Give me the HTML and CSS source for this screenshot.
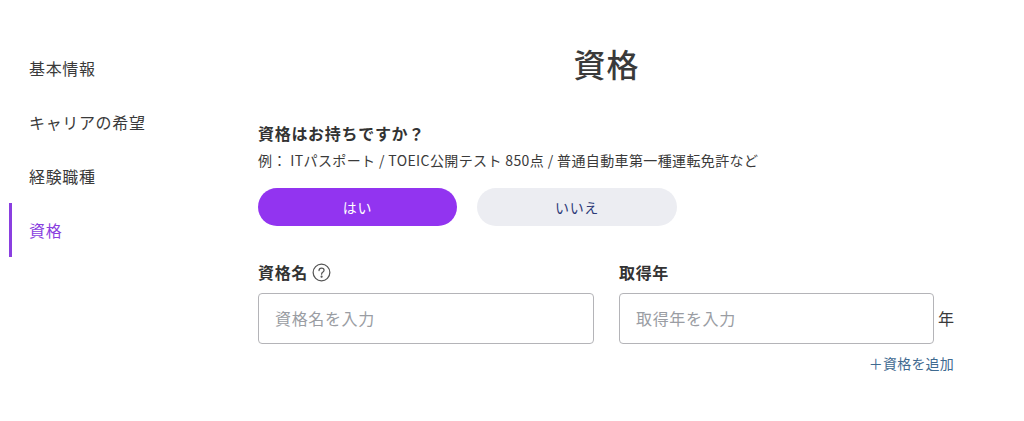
FILE: index.html
```html
<!DOCTYPE html>
<html lang="ja">
<head>
<meta charset="utf-8">
<title>資格</title>
<link rel="stylesheet" href="styles.css">
</head>
<body>
<div class="page">
  <nav class="side">
    <a class="nav-item">基本情報</a>
    <a class="nav-item">キャリアの希望</a>
    <a class="nav-item">経験職種</a>
    <a class="nav-item active">資格</a>
  </nav>
  <main class="main">
    <h1 class="title">資格</h1>
    <h2 class="question">資格はお持ちですか？</h2>
    <p class="example">例： ITパスポート / TOEIC公開テスト 850点 / 普通自動車第一種運転免許など</p>
    <div class="choices">
      <button class="choice on">はい</button>
      <button class="choice off">いいえ</button>
    </div>
    <div class="fields">
      <div class="field name">
        <div class="label">資格名
          <svg class="help" width="19" height="19" viewBox="0 0 20 20" fill="none" stroke="#555" stroke-width="1.3"><circle cx="10" cy="10" r="8.8"/><path d="M7.4 8c0-1.6 1.2-2.6 2.7-2.6s2.6 1 2.6 2.2c0 1.1-.7 1.6-1.5 2.2-.7.5-1.1 1-1.1 2" stroke-linecap="round"/><circle cx="10.1" cy="14.4" r=".5" fill="#555"/></svg>
        </div>
        <div class="input">資格名を入力</div>
      </div>
      <div class="field year">
        <div class="label">取得年</div>
        <div class="year-row">
          <div class="input">取得年を入力</div>
          <span class="unit">年</span>
        </div>
      </div>
    </div>
    <a class="add">＋資格を追加</a>
  </main>
</div>
</body>
</html>
```

FILE: styles.css
```css
* { box-sizing: border-box; }
html, body { margin: 0; padding: 0; }
body {
  width: 1024px;
  height: 421px;
  overflow: hidden;
  background: #fff;
  color: #3a3a3a;
  font-family: "Noto Sans CJK JP", "Noto Sans", sans-serif;
}
.page { display: flex; padding-left: 9px; height: 421px; }
.side { width: 249px; padding-top: 41px; flex: none; display: flex; flex-direction: column; }
.nav-item {
  height: 54px;
  display: flex;
  align-items: center;
  padding-left: 17px;
  border-left: 3px solid transparent;
  font-size: 16px;
  letter-spacing: 0.65px;
  color: #3a3a3a;
}
.nav-item.active { color: #8a3fe0; border-left-color: #8a3fe0; }
.main { width: 697px; display: flex; flex-direction: column; }
.title {
  margin: 38px 0 0;
  height: 51px;
  line-height: 51px;
  text-align: center;
  font-size: 32px;
  font-weight: 500;
  letter-spacing: 1px;
  color: #3a3a3a;
}
.question { margin: 32px 0 0; height: 24px; line-height: 24px; font-size: 16px; font-weight: 700; letter-spacing: 0.7px; color: #333; }
.example { margin: 5px 0 0; height: 20px; line-height: 20px; font-size: 14px; letter-spacing: 0.38px; color: #3a3a3a; }
.choices { display: flex; gap: 20px; margin-top: 18px; }
.choice {
  height: 38px;
  border: 0;
  border-radius: 19px;
  font-family: inherit;
  font-size: 14px;
  font-weight: 400;
  letter-spacing: 0.7px;
  padding: 0;
}
.choice.on { width: 199px; background: #9234f0; color: #fff; }
.choice.off { width: 200px; background: #ecedf2; color: #2d3a78; }
.fields { display: flex; margin-top: 34px; gap: 25px; }
.field.name { width: 336px; }
.field.year { width: 336px; }
.label {
  height: 24px;
  display: flex;
  align-items: center;
  gap: 4px;
  font-size: 16px;
  font-weight: 700;
  letter-spacing: 0.65px;
  color: #333;
}
.help { flex: none; }
.input {
  margin-top: 9px;
  height: 51px;
  border: 1px solid #b4b4b8;
  border-radius: 4px;
  padding: 0 0 2px 16px;
  display: flex;
  align-items: center;
  font-size: 16px;
  letter-spacing: 0.65px;
  color: #9a9da3;
  background: #fff;
}
.year-row { display: flex; align-items: flex-end; gap: 4px; }
.year-row .input { width: 315px; flex: none; }
.unit { font-size: 16px; line-height: 50px; height: 51px; color: #3a3a3a; }
.add { align-self: flex-end; margin: 8px 1px 0 0; font-size: 14px; line-height: 22px; letter-spacing: 0.2px; color: #3f6a90; }
```
